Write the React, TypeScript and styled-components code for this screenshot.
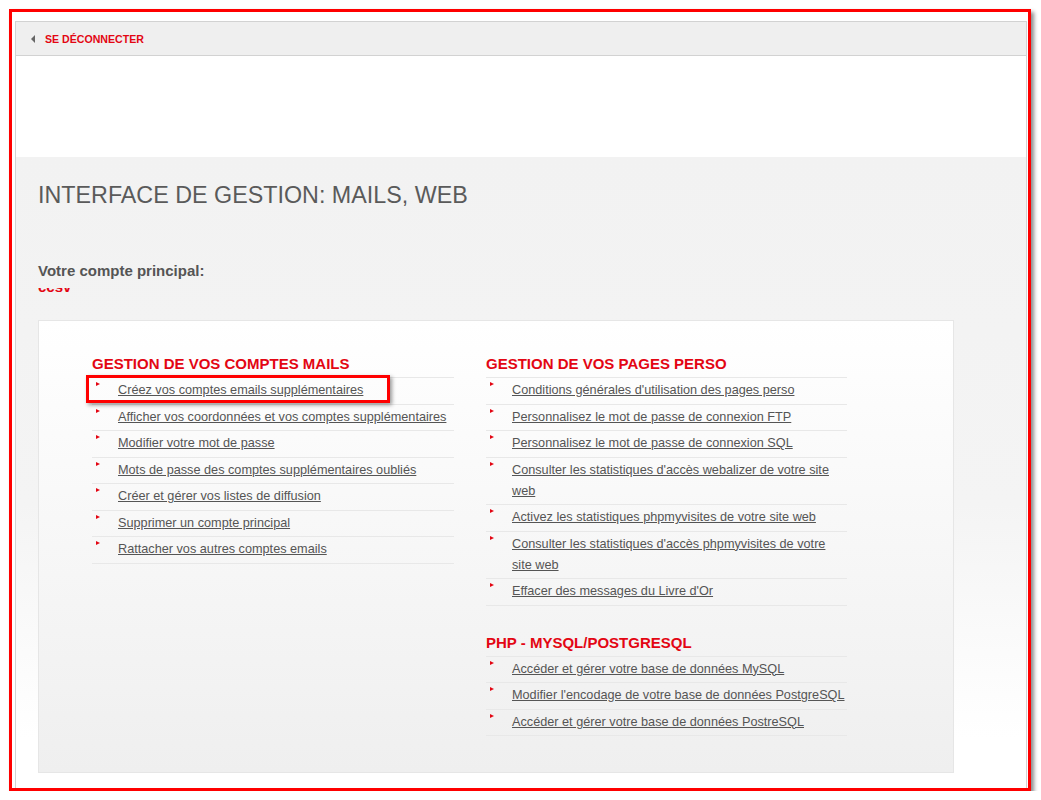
import React from "react";
import styled, { createGlobalStyle } from "styled-components";

const GlobalStyle = createGlobalStyle`
  html, body {
    margin: 0;
    padding: 0;
    background: #fff;
  }
  body {
    font-family: "Liberation Sans", Arial, sans-serif;
  }
`;

const Frame = styled.div`
  margin: 9px 10px 0 9px;
  border: 3px solid #f00;
  box-shadow: 3px 3px 4px rgba(0, 0, 0, 0.45);
  padding: 9px 1px 0 3px;
`;

const Container = styled.div`
  border: 1px solid #d2d2d2;
  border-bottom: none;
`;

const TopBar = styled.div`
  display: flex;
  align-items: center;
  gap: 10px;
  height: 33px;
  padding-left: 15px;
  background: #efefef;
  border-bottom: 1px solid #d2d2d2;
`;

const BackArrow = styled.span`
  width: 0;
  height: 0;
  border-top: 4px solid transparent;
  border-bottom: 4px solid transparent;
  border-right: 4px solid #666;
`;

const LogoutLink = styled.a`
  color: #e30613;
  font-size: 10.6px;
  font-weight: bold;
  text-decoration: none;
`;

const Spacer = styled.div`
  height: 101px;
  background: #fff;
`;

const Section = styled.section`
  padding: 24px 0 15px 22px;
  background: linear-gradient(to bottom, #f2f2f2 0%, #f4f4f4 55%, #fff 92%);
`;

const Title = styled.h1`
  margin: 0;
  font-size: 23.3px;
  line-height: 28px;
  font-weight: normal;
  color: #5a5a5a;
`;

const AccountLabel = styled.div`
  margin-top: 53px;
  font-size: 15px;
  line-height: 18px;
  font-weight: bold;
  color: #555;
`;

const AccountClip = styled.div`
  height: 7px;
  margin-top: 8px;
  overflow: hidden;
`;

const AccountName = styled.div`
  margin-top: -9px;
  color: #e30613;
  font-size: 15px;
  line-height: 16px;
  font-weight: bold;
`;

const Card = styled.div`
  margin-top: 25px;
  width: 861px;
  padding: 34px 0 36px 53px;
  border: 1px solid #e6e6e6;
  background: linear-gradient(to bottom, #fff 0%, #efefef 100%);
  display: grid;
  grid-template-columns: 362px 361px;
  column-gap: 32px;
  align-items: start;
`;

const Column = styled.div``;

const Block = styled.div<{ $spaced?: boolean }>`
  margin-top: ${(p) => (p.$spaced ? "28px" : "0")};
`;

const BlockTitle = styled.h2`
  margin: 0 0 4px;
  font-size: 15px;
  line-height: 18px;
  font-weight: bold;
  color: #e30613;
`;

const List = styled.ul`
  margin: 0;
  padding: 0;
  list-style: none;
  border-top: 1px solid #e8e8e8;
`;

const Item = styled.li`
  position: relative;
  padding: 2px 0 2.5px 26px;
  border-bottom: 1px solid #e8e8e8;
  font-size: 12.7px;
  line-height: 21px;

  &::before {
    content: "";
    position: absolute;
    left: 4px;
    top: 4px;
    border-top: 2.5px solid transparent;
    border-bottom: 2.5px solid transparent;
    border-left: 4px solid #e30613;
  }
`;

const ItemLink = styled.a`
  color: #555;
  text-decoration: underline;
`;

const Highlight = styled.span`
  position: absolute;
  left: -6px;
  top: -3px;
  width: 298px;
  height: 22px;
  border: 3px solid #f00;
  box-shadow: 2px 2px 4px rgba(0, 0, 0, 0.4);
  pointer-events: none;
`;

type Group = { title: string; items: string[] };

const mails: Group = {
  title: "GESTION DE VOS COMPTES MAILS",
  items: [
    "Créez vos comptes emails supplémentaires",
    "Afficher vos coordonnées et vos comptes supplémentaires",
    "Modifier votre mot de passe",
    "Mots de passe des comptes supplémentaires oubliés",
    "Créer et gérer vos listes de diffusion",
    "Supprimer un compte principal",
    "Rattacher vos autres comptes emails",
  ],
};

const pages: Group = {
  title: "GESTION DE VOS PAGES PERSO",
  items: [
    "Conditions générales d'utilisation des pages perso",
    "Personnalisez le mot de passe de connexion FTP",
    "Personnalisez le mot de passe de connexion SQL",
    "Consulter les statistiques d'accès webalizer de votre site web",
    "Activez les statistiques phpmyvisites de votre site web",
    "Consulter les statistiques d'accès phpmyvisites de votre site web",
    "Effacer des messages du Livre d'Or",
  ],
};

const databases: Group = {
  title: "PHP - MYSQL/POSTGRESQL",
  items: [
    "Accéder et gérer votre base de données MySQL",
    "Modifier l'encodage de votre base de données PostgreSQL",
    "Accéder et gérer votre base de données PostreSQL",
  ],
};

const LinkGroup = ({ group, spaced, highlightFirst }: { group: Group; spaced?: boolean; highlightFirst?: boolean }) => (
  <Block $spaced={spaced}>
    <BlockTitle>{group.title}</BlockTitle>
    <List>
      {group.items.map((label, i) => (
        <Item key={label}>
          {highlightFirst && i === 0 && <Highlight />}
          <ItemLink href="#">{label}</ItemLink>
        </Item>
      ))}
    </List>
  </Block>
);

const App = () => {
  return (
    <>
      <GlobalStyle />
      <Frame>
        <Container>
          <TopBar>
            <BackArrow />
            <LogoutLink href="#">SE DÉCONNECTER</LogoutLink>
          </TopBar>
          <Spacer />
          <Section>
            <Title>INTERFACE DE GESTION: MAILS, WEB</Title>
            <AccountLabel>Votre compte principal:</AccountLabel>
            <AccountClip>
              <AccountName>ccsv</AccountName>
            </AccountClip>
            <Card>
              <Column>
                <LinkGroup group={mails} highlightFirst />
              </Column>
              <Column>
                <LinkGroup group={pages} />
                <LinkGroup group={databases} spaced />
              </Column>
            </Card>
          </Section>
        </Container>
      </Frame>
    </>
  );
};

export default App;
